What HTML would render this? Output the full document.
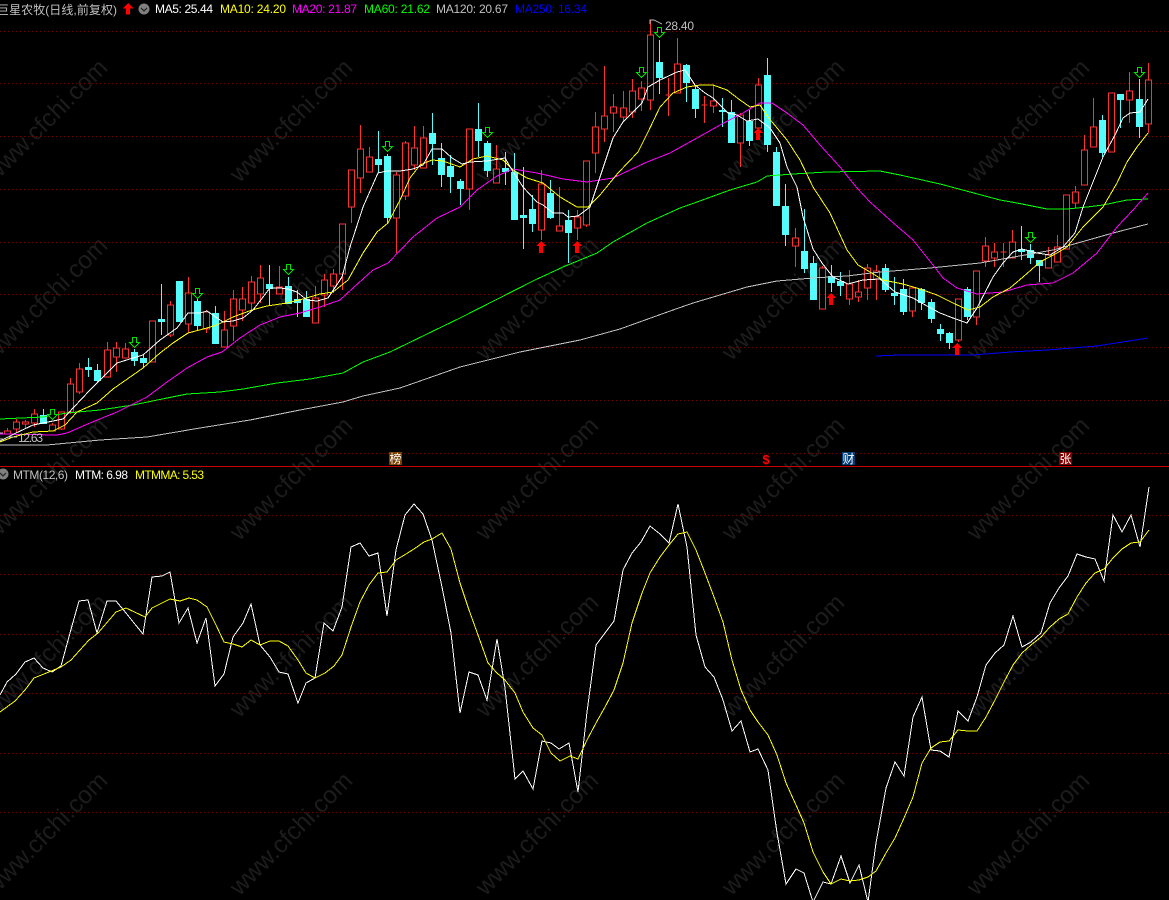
<!DOCTYPE html>
<html lang="zh"><head><meta charset="utf-8"><title>MTM</title>
<style>
html,body{margin:0;padding:0;background:#000;width:1169px;height:900px;overflow:hidden}
svg{display:block;position:absolute;left:0;top:0}
text{font-family:"Liberation Sans","Noto Sans CJK SC",sans-serif;font-size:12px}
.wm text{font-size:24.5px;fill:#1c1c1c;text-anchor:end}
.l{fill:none;stroke-width:1;shape-rendering:crispEdges}
.g{fill:none;stroke:#780000;stroke-width:1;stroke-dasharray:1 3;shape-rendering:crispEdges}
</style></head><body>
<svg width="1169" height="900" viewBox="0 0 1169 900" xmlns="http://www.w3.org/2000/svg">
<rect width="1169" height="900" fill="#000"/>
<g class="wm">
<text x="109" y="69" transform="rotate(-45 109 69)">www.cfchi.com</text>
<text x="354" y="69" transform="rotate(-45 354 69)">www.cfchi.com</text>
<text x="600" y="69" transform="rotate(-45 600 69)">www.cfchi.com</text>
<text x="846" y="69" transform="rotate(-45 846 69)">www.cfchi.com</text>
<text x="1091" y="69" transform="rotate(-45 1091 69)">www.cfchi.com</text>
<text x="109" y="247" transform="rotate(-45 109 247)">www.cfchi.com</text>
<text x="354" y="247" transform="rotate(-45 354 247)">www.cfchi.com</text>
<text x="600" y="247" transform="rotate(-45 600 247)">www.cfchi.com</text>
<text x="846" y="247" transform="rotate(-45 846 247)">www.cfchi.com</text>
<text x="1091" y="247" transform="rotate(-45 1091 247)">www.cfchi.com</text>
<text x="109" y="427" transform="rotate(-45 109 427)">www.cfchi.com</text>
<text x="354" y="427" transform="rotate(-45 354 427)">www.cfchi.com</text>
<text x="600" y="427" transform="rotate(-45 600 427)">www.cfchi.com</text>
<text x="846" y="427" transform="rotate(-45 846 427)">www.cfchi.com</text>
<text x="1091" y="427" transform="rotate(-45 1091 427)">www.cfchi.com</text>
<text x="109" y="604" transform="rotate(-45 109 604)">www.cfchi.com</text>
<text x="354" y="604" transform="rotate(-45 354 604)">www.cfchi.com</text>
<text x="600" y="604" transform="rotate(-45 600 604)">www.cfchi.com</text>
<text x="846" y="604" transform="rotate(-45 846 604)">www.cfchi.com</text>
<text x="1091" y="604" transform="rotate(-45 1091 604)">www.cfchi.com</text>
<text x="109" y="782" transform="rotate(-45 109 782)">www.cfchi.com</text>
<text x="354" y="782" transform="rotate(-45 354 782)">www.cfchi.com</text>
<text x="600" y="782" transform="rotate(-45 600 782)">www.cfchi.com</text>
<text x="846" y="782" transform="rotate(-45 846 782)">www.cfchi.com</text>
<text x="1091" y="782" transform="rotate(-45 1091 782)">www.cfchi.com</text>
</g>
<path class="g" d="M0 31.5H1169M0 83.5H1169M0 136.5H1169M0 189.5H1169M0 242.5H1169M0 294.5H1169M0 347.5H1169M0 400.5H1169M0 453.5H1169M0 515.5H1169M0 574.5H1169M0 634.5H1169M0 693.5H1169M0 753.5H1169M0 812.5H1169"/>
<rect x="0" y="466" width="1169" height="1" fill="#c80000"/>

<!-- red candles -->
<path class="l" stroke="#ff3232" d="M7.5 428V431M4.5 431h6V434h-6z
M16.5 419V422M16.5 429V433M13.5 422h6V429h-6z
M25.5 420V422M25.5 424V429M22.5 422h6V424h-6z
M34.5 409V414M34.5 423V427M31.5 414h6V423h-6z
M52.5 423V425M49.5 425h6V431h-6z
M61.5 430V429M58.5 412h6V429h-6z
M70.5 378V384M70.5 412V414M67.5 384h6V412h-6z
M79.5 363V369M79.5 392V394M76.5 369h6V392h-6z
M107.5 342V350M104.5 350h6V377h-6z
M116.5 342V348M116.5 357V372M113.5 348h6V357h-6z
M125.5 343V349M122.5 349h6V358h-6z
M149.5 321h6V362h-6z
M170.5 301V305M170.5 335V337M167.5 305h6V335h-6z
M188.5 277V293M188.5 324V333M185.5 293h6V324h-6z
M206.5 310V312M206.5 329V333M203.5 312h6V329h-6z
M224.5 311V330M221.5 330h6V347h-6z
M233.5 290V299M233.5 326V341M230.5 299h6V326h-6z
M242.5 287V299M242.5 310V321M239.5 299h6V310h-6z
M251.5 276V282M251.5 303V310M248.5 282h6V303h-6z
M260.5 265V278M260.5 294V303M257.5 278h6V294h-6z
M279.5 266V287M276.5 287h6V294h-6z
M315.5 286V298M312.5 298h6V323h-6z
M324.5 274V280M324.5 295V307M321.5 280h6V295h-6z
M333.5 269V274M333.5 286V293M330.5 274h6V286h-6z
M342.5 274V290M339.5 224h6V274h-6z
M351.5 207V223M348.5 170h6V207h-6z
M360.5 125V149M360.5 178V193M357.5 149h6V178h-6z
M369.5 147V157M366.5 157h6V172h-6z
M396.5 172V175M396.5 218V253M393.5 175h6V218h-6z
M405.5 141V143M405.5 196V200M402.5 143h6V196h-6z
M414.5 126V148M414.5 165V170M411.5 148h6V165h-6z
M423.5 126V138M420.5 138h6V168h-6z
M469.5 189V210M466.5 129h6V189h-6z
M496.5 145V169M493.5 169h6V183h-6z
M541.5 170V184M541.5 230V240M538.5 184h6V230h-6z
M559.5 187V226M556.5 226h6V231h-6z
M577.5 210V217M577.5 228V240M574.5 217h6V228h-6z
M586.5 225V227M583.5 161h6V225h-6z
M595.5 112V127M595.5 153V173M592.5 127h6V153h-6z
M604.5 66V116M604.5 129V142M601.5 116h6V129h-6z
M613.5 94V107M613.5 113V132M610.5 107h6V113h-6z
M623.5 91V108M623.5 117V122M620.5 108h6V117h-6z
M632.5 79V91M632.5 112V118M629.5 91h6V112h-6z
M641.5 81V88M641.5 99V111M638.5 88h6V99h-6z
M650.5 20V35M650.5 100V110M647.5 35h6V100h-6z
M668.5 78V116M665.5 95h6
M677.5 38V64M674.5 64h6V93h-6z
M704.5 96V123M701.5 105h6
M713.5 85V101M713.5 106V113M710.5 101h6V106h-6z
M740.5 113V115M740.5 143V167M737.5 115h6V143h-6z
M758.5 78V85M758.5 128V137M755.5 85h6V128h-6z
M795.5 228V238M795.5 246V267M792.5 238h6V246h-6z
M822.5 266V268M819.5 268h6V309h-6z
M849.5 270V284M849.5 299V305M846.5 284h6V299h-6z
M858.5 280V292M858.5 297V302M855.5 292h6V297h-6z
M867.5 264V268M867.5 288V300M864.5 268h6V288h-6z
M876.5 265V271M876.5 279V300M873.5 271h6V279h-6z
M912.5 287V288M912.5 311V317M909.5 288h6V311h-6z
M958.5 340V342M955.5 299h6V340h-6z
M976.5 317V325M973.5 271h6V317h-6z
M985.5 237V246M985.5 261V267M982.5 246h6V261h-6z
M994.5 243V252M994.5 258V267M991.5 252h6V258h-6z
M1003.5 243V267M1000.5 252h6
M1012.5 230V242M1009.5 242h6V258h-6z
M1048.5 247V255M1045.5 255h6V268h-6z
M1057.5 235V247M1054.5 247h6V262h-6z
M1063.5 195h6V249h-6z
M1075.5 186V192M1075.5 203V208M1072.5 192h6V203h-6z
M1084.5 135V150M1081.5 150h6V185h-6z
M1093.5 98V127M1090.5 127h6V147h-6z
M1108.5 93h6V152h-6z
M1129.5 72V91M1129.5 100V123M1126.5 91h6V100h-6z
M1148.5 63V80M1148.5 124V133M1145.5 80h6V124h-6z"/>

<!-- cyan wicks -->
<path class="l" stroke="#54fcfc" d="M43.5 409V424M88.5 358V377M97.5 364V383M134.5 349V366M143.5 354V367M161.5 284V335M179.5 281V322M197.5 295V330M215.5 306V343M269.5 265V305M288.5 277V303M297.5 290V317M306.5 291V317M378.5 131V173M387.5 154V223M432.5 113V165M441.5 143V187M450.5 155V193M460.5 179V205M478.5 103V157M487.5 141V177M505.5 152V185M514.5 153V220M523.5 167V249M532.5 195V232M550.5 180V219M568.5 210V263M659.5 40V94M686.5 64V102M695.5 85V118M722.5 98V127M731.5 100V143M749.5 110V146M767.5 58V152M776.5 147V206M785.5 184V246M804.5 209V273M813.5 256V300M831.5 265V292M840.5 272V296M885.5 264V292M894.5 277V305M903.5 279V315M921.5 288V310M931.5 299V323M940.5 324V341M949.5 332V349M967.5 287V320M1021.5 226V260M1030.5 244V264M1039.5 260V282M1102.5 115V157M1120.5 94V128M1139.5 79V138"/>
<!-- cyan bodies -->
<path fill="#54fcfc" shape-rendering="crispEdges" d="M40 415h7V424h-7zM85 367h7V370h-7zM94 370h7V381h-7zM131 352h7V361h-7zM140 358h7V363h-7zM158 319h7V322h-7zM176 281h7V322h-7zM194 301h7V326h-7zM212 313h7V344h-7zM266 284h7V289h-7zM285 286h7V304h-7zM294 299h7V303h-7zM303 299h7V317h-7zM375 159h7V165h-7zM384 156h7V218h-7zM429 133h7V144h-7zM438 158h7V175h-7zM447 166h7V177h-7zM457 181h7V189h-7zM475 129h7V141h-7zM484 143h7V171h-7zM502 168h7V172h-7zM511 172h7V220h-7zM520 215h7V218h-7zM529 209h7V224h-7zM547 193h7V218h-7zM565 220h7V233h-7zM656 62h7V78h-7zM683 65h7V83h-7zM692 89h7V109h-7zM719 110h7V112h-7zM728 112h7V143h-7zM746 121h7V141h-7zM764 75h7V145h-7zM773 152h7V206h-7zM782 206h7V235h-7zM801 251h7V269h-7zM810 263h7V300h-7zM828 276h7V283h-7zM837 281h7V286h-7zM882 268h7V290h-7zM891 293h7V296h-7zM900 289h7V312h-7zM918 289h7V303h-7zM928 302h7V319h-7zM937 329h7V334h-7zM946 333h7V343h-7zM964 289h7V317h-7zM1018 249h7V252h-7zM1027 250h7V258h-7zM1036 260h7V266h-7zM1099 120h7V153h-7zM1117 94h7V100h-7zM1136 99h7V127h-7z"/>

<!-- moving averages -->
<polyline class="l" stroke="#0000ff" points="876,356 900,355 973,355 1010,352 1047,350 1097,346 1148,338"/>
<polyline class="l" stroke="#c0c0c0" points="0,445 47,445 100,440 147,437 200,428 250,420 300,410 343,402 363,396 400,388 460,367 520,352 580,340 620,329 673,310 693,303 720,295 747,287 777,281 813,278 847,276 880,272 930,268 980,263 1053,250 1113,233 1148,224"/>
<polyline class="l" stroke="#00ff00" points="0,419 43,417 67,413 100,410 133,405 167,398 187,394 220,392 243,389 277,383 310,379 343,373 363,362 390,352 460,318 535,280 563,267 597,253 613,242 647,223 680,208 697,202 730,190 757,182 767,176 793,174 827,172 880,171 900,175 940,184 970,192 1000,200 1017,203 1047,209 1067,209 1087,207 1103,205 1127,200 1148,199"/>
<polyline class="l" stroke="#ff00ff" points="0,434 57,435 67,433 90,423 117,412 147,397 167,382 187,368 207,357 222,352 240,338 260,325 280,317 300,313 320,307 340,300 353,288 373,270 388,263 413,237 437,218 460,207 477,190 497,176 513,169 537,173 563,179 587,182 613,178 647,162 670,153 697,138 720,125 743,113 760,103 772,103 787,113 803,125 820,145 840,167 857,188 870,202 890,220 913,240 933,265 943,278 957,288 977,294 1003,292 1027,285 1053,283 1073,273 1097,253 1117,227 1133,210 1148,193"/>
<polyline class="l" stroke="#ffff00" points="0,442 13,437 33,432 53,431 65,425 77,412 97,403 113,389 143,368 160,353 173,343 188,333 207,328 217,325 233,317 252,310 267,306 287,303 303,299 320,294 333,292 348,280 363,253 377,232 388,223 400,200 410,178 420,165 432,160 443,161 460,167 473,159 487,156 503,160 513,170 527,178 543,183 560,197 577,207 588,207 600,195 618,173 638,152 648,132 660,107 673,93 687,87 700,85 713,85 727,90 740,100 750,107 760,105 768,117 787,140 800,160 813,187 830,213 847,250 858,265 870,272 883,280 903,284 920,289 937,295 953,303 968,310 980,307 993,297 1010,288 1023,277 1040,262 1057,253 1067,247 1083,227 1103,207 1117,183 1127,162 1137,147 1148,133"/>
<polyline class="l" stroke="#ffffff" points="0,441 16,433 33,425 63,419 74,407 90,390 103,377 117,363 133,358 143,355 160,340 177,328 188,313 200,313 207,311 223,322 233,321 243,318 253,310 270,288 280,288 288,289 297,292 307,300 317,301 328,298 342,277 350,247 363,207 378,173 387,171 400,171 413,169 423,165 432,149 442,149 452,158 462,164 470,162 487,161 505,158 512,170 523,187 537,202 543,205 553,213 563,213 568,217 578,216 590,207 600,177 613,138 623,122 642,103 648,87 660,80 677,72 685,70 695,85 705,93 713,98 728,113 737,115 747,121 758,119 770,128 780,143 787,167 797,187 803,217 813,249 822,263 833,277 848,284 863,280 880,279 895,292 913,298 927,306 940,313 953,318 967,323 977,308 993,277 1003,263 1013,252 1022,249 1037,253 1050,255 1063,247 1075,233 1083,207 1093,182 1103,157 1115,135 1123,118 1130,113 1140,112 1148,99"/>

<!-- green down arrows -->
<path fill="#000" stroke="#00e000" stroke-width="1" shape-rendering="crispEdges" d="M50.5 409.5h4v5h3l-5 5-5-5h3zM132.5 337.5h4v5h3l-5 5-5-5h3zM195.5 288.5h4v5h3l-5 5-5-5h3zM286.5 264.5h4v5h3l-5 5-5-5h3zM385.5 141.5h4v5h3l-5 5-5-5h3zM485.5 127.5h4v5h3l-5 5-5-5h3zM639.5 67.5h4v5h3l-5 5-5-5h3zM657.5 27.5h4v5h3l-5 5-5-5h3zM1028.5 232.5h4v5h3l-5 5-5-5h3zM1137.5 67.5h4v5h3l-5 5-5-5h3z"/>
<!-- red up arrows -->
<path fill="#ff0000" shape-rendering="crispEdges" d="M541 241l5 5h-3v7h-4v-7h-3zM577 241l5 5h-3v7h-4v-7h-3zM758 128l5 5h-3v7h-4v-7h-3zM831 293l5 5h-3v7h-4v-7h-3zM957 343l5 5h-3v7h-4v-7h-3zM128 3l5.5 5.5h-3.500v6h-4v-6h-3.500z"/>

<!-- extreme labels -->
<path class="l" stroke="#c0c0c0" d="M650 24V20H654L662 24"/>
<text x="665" y="30" fill="#c0c0c0" textLength="29">28.40</text>
<path class="l" stroke="#c0c0c0" d="M0 433H3M0 439H3M8 437H17"/>
<text x="18" y="442" fill="#c0c0c0" textLength="25">12.63</text>

<!-- event tags -->
<rect x="389" y="452" width="13" height="13" fill="#7a4000"/>
<text x="389.5" y="463" fill="#fff">榜</text>
<text x="762.5" y="464" fill="#ff0000" style="font-size:13px;font-weight:bold">$</text>
<rect x="842" y="452" width="13" height="13" fill="#003c78"/>
<text x="842.5" y="463" fill="#fff">财</text>
<rect x="1059" y="452" width="13" height="13" fill="#800000"/>
<text x="1059.5" y="463" fill="#fff">张</text>

<!-- MTM lines -->
<polyline class="l" stroke="#ffffff" points="0,695 7,682 16,674 25,662 34,658 43,668 52,672 61,666 70,633 79,601 88,600 97,633 107,601 116,601 126,613 134,623 143,634 152,577 162,576 170,572 179,623 188,608 197,643 206,618 215,686 224,674 233,637 243,623 251,604 260,645 270,657 279,672 288,674 298,703 306,683 315,678 324,623 333,631 342,607 351,547 360,543 369,556 378,553 387,616 396,550 405,515 414,504 423,514 432,540 442,587 451,633 460,713 469,672 478,675 487,700 497,639 505,688 515,779 523,771 533,789 542,741 551,743 559,749 569,743 578,792 587,712 596,645 605,633 614,621 623,570 632,553 641,542 650,526 660,534 669,543 678,504 687,547 696,635 705,667 714,677 723,700 732,731 741,721 750,752 758,749 768,770 777,833 786,884 796,869 804,873 813,902 823,882 831,884 841,856 850,883 859,865 868,902 876,843 886,788 895,762 904,776 913,717 922,697 931,750 940,751 949,757 958,711 968,721 977,697 986,665 995,653 1004,645 1013,616 1022,647 1031,642 1041,633 1050,603 1059,588 1068,576 1077,554 1086,557 1095,559 1104,581 1113,515 1122,532 1131,515 1140,547 1149,487"/>
<polyline class="l" stroke="#ffff00" points="0,712 15,701 25,690 34,678 44,674 61,667 71,660 89,640 98,633 116,612 126,608 145,617 152,608 170,599 180,601 189,598 197,600 207,607 216,625 224,642 233,644 242,647 251,640 260,645 270,641 279,641 288,646 298,660 306,673 315,678 325,673 334,666 342,655 351,627 360,602 369,585 378,573 387,572 396,560 406,554 414,549 424,542 432,539 442,533 451,549 460,583 469,610 478,635 488,663 497,673 505,680 515,693 523,712 533,728 542,735 551,753 560,761 570,756 578,759 587,740 596,723 605,707 614,690 623,663 632,623 642,593 650,573 660,557 669,545 678,534 687,532 696,550 705,573 714,597 723,622 732,660 741,690 750,710 758,722 768,735 777,755 786,783 796,805 804,823 813,852 823,872 831,884 841,879 850,881 859,880 868,877 876,871 886,853 895,838 904,818 913,797 922,763 931,748 940,742 949,741 958,730 968,731 977,731 986,717 995,700 1004,682 1013,665 1022,653 1031,645 1041,637 1050,627 1059,619 1068,614 1077,597 1086,583 1095,573 1104,569 1113,558 1122,549 1131,543 1140,542 1149,530"/>

<!-- header -->
<text x="-3" y="14" fill="#c0c0c0" textLength="120">巨星农牧(日线,前复权)</text>
<circle cx="144" cy="9" r="5.5" fill="#808080"/>
<path d="M141 8l3 3 3-3" fill="none" stroke="#2a2a2a" stroke-width="1.3"/>
<text x="155" y="13" fill="#ffffff" textLength="58">MA5: 25.44</text>
<text x="220" y="13" fill="#ffff00" textLength="66">MA10: 24.20</text>
<text x="292" y="13" fill="#ff00ff" textLength="65">MA20: 21.87</text>
<text x="364" y="13" fill="#00ff00" textLength="66">MA60: 21.62</text>
<text x="436" y="13" fill="#c0c0c0" textLength="72">MA120: 20.67</text>
<text x="515" y="13" fill="#0000ff" textLength="72">MA250: 16.34</text>

<!-- MTM header -->
<circle cx="3" cy="474" r="5.5" fill="#808080"/>
<path d="M0 473l3 3 3-3" fill="none" stroke="#2a2a2a" stroke-width="1.3"/>
<text x="13" y="479" fill="#c0c0c0" textLength="55">MTM(12,6)</text>
<text x="75" y="479" fill="#ffffff" textLength="53">MTM: 6.98</text>
<text x="135" y="479" fill="#ffff00" textLength="69">MTMMA: 5.53</text>
</svg>
</body></html>
